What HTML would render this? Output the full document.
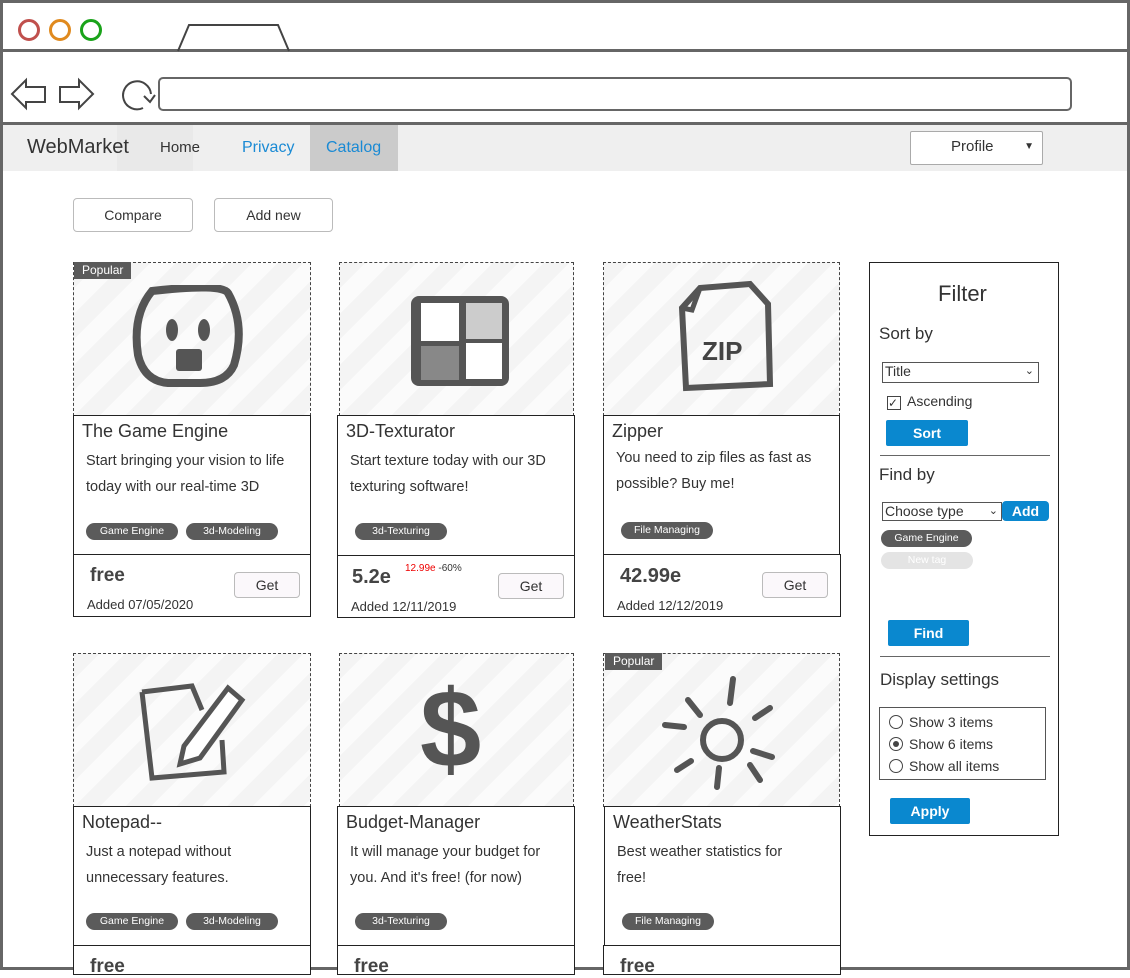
<!DOCTYPE html>
<html><head><meta charset="utf-8"><style>
*{box-sizing:border-box;margin:0;padding:0}
body{width:1130px;height:970px;position:relative;overflow:hidden;background:#fff;font-family:"Liberation Sans",sans-serif;color:#333}
.a{position:absolute}
.img{position:absolute;border:1.5px dashed #444;background:repeating-linear-gradient(135deg,#f4f4f4 0 18px,#fbfbfb 18px 36px)}
.body{position:absolute;border:1.5px solid #222;background:#fff}
.foot{position:absolute;border:1.5px solid #222;background:#fff}
.title{position:absolute;left:8px;top:5px;font-size:18px;color:#333}
.desc{position:absolute;left:12px;top:32px;font-size:14.5px;line-height:26px;color:#333;width:205px;height:52px;overflow:hidden}
.tag{position:absolute;height:17px;border-radius:9px;background:#5b5b5b;color:#fff;font-size:10.5px;line-height:17px;text-align:center}
.pop{position:absolute;background:#5b5b5b;color:#fff;font-size:12px;padding:0 8px;height:17px;line-height:17px}
.btn{position:absolute;border:1px solid #bbb;border-radius:4px;background:#fff;font-size:14px;text-align:center;color:#333}
.get{position:absolute;width:66px;height:26px;border:1px solid #bbb;border-radius:4px;background:#fbf8fb;font-size:14px;line-height:24px;text-align:center}
.blue{position:absolute;background:#0a88cf;color:#fff;font-weight:bold;font-size:14px;text-align:center;border-radius:2px}
.rad{display:inline-block;width:14px;height:14px;border:1px solid #444;border-radius:50%;vertical-align:-2px;margin-right:6px;position:relative}
</style></head><body>
<div class="a" style="left:0;top:0;width:1130px;height:970px;border:3px solid #666"></div>
<div class="a" style="left:0;top:49px;width:1130px;height:3px;background:#666"></div>
<div class="a" style="left:0;top:122px;width:1130px;height:3px;background:#666"></div>
<div class="a" style="left:18px;top:19px;width:22px;height:22px;border:3px solid #c0504d;border-radius:50%"></div>
<div class="a" style="left:49px;top:19px;width:22px;height:22px;border:3px solid #e08a1e;border-radius:50%"></div>
<div class="a" style="left:80px;top:19px;width:22px;height:22px;border:3px solid #1aa31a;border-radius:50%"></div>
<svg class="a" style="left:0;top:0" width="400" height="125">
<path d="M178 51 L189 25 L278 25 L289 51" fill="none" stroke="#444" stroke-width="2"/>
<path d="M12 94 L26 80 L26 87 L45 87 L45 102 L26 102 L26 108 Z" fill="none" stroke="#444" stroke-width="2"/>
<path d="M93 94 L79 80 L79 87 L60 87 L60 102 L79 102 L79 108 Z" fill="none" stroke="#444" stroke-width="2"/>
<path d="M143 108 A14 14 0 1 1 151 94 M144 96 L150 102 L155 95" fill="none" stroke="#444" stroke-width="2"/>
</svg>
<div class="a" style="left:158px;top:77px;width:914px;height:34px;border:2px solid #666;border-radius:5px"></div>
<div class="a" style="left:3px;top:125px;width:1124px;height:46px;background:#efefef"></div>
<div class="a" style="left:117px;top:125px;width:76px;height:46px;background:#e9e9e9"></div>
<div class="a" style="left:310px;top:125px;width:88px;height:46px;background:#cbcbcb"></div>
<div class="a" style="left:27px;top:136px;font-size:20px;color:#333">WebMarket</div>
<div class="a" style="left:160px;top:139px;font-size:15px;color:#333">Home</div>
<div class="a" style="left:242px;top:139px;font-size:16px;color:#1a8ad4">Privacy</div>
<div class="a" style="left:326px;top:139px;font-size:16px;color:#1a8ad4">Catalog</div>
<div class="a" style="left:910px;top:131px;width:133px;height:34px;background:#fff;border:1px solid #aaa;border-radius:2px;font-size:15px;padding:6px 0 0 40px">Profile<span style="position:absolute;right:8px;top:9px;font-size:10px">▼</span></div>
<div class="btn" style="left:73px;top:198px;width:120px;height:34px;line-height:32px">Compare</div>
<div class="btn" style="left:214px;top:198px;width:119px;height:34px;line-height:32px">Add new</div>

<div class="img" style="left:73px;top:262px;width:238px;height:154px"></div>
<div class="pop" style="left:74px;top:262px">Popular</div>
<svg class="a" style="left:130px;top:285px" width="120" height="110"><path d="M22 6 Q92 -2 98 8 Q116 40 104 80 Q96 98 70 98 L38 98 Q14 96 8 70 Q2 30 22 6 Z" fill="none" stroke="#555" stroke-width="8"/><ellipse cx="42" cy="45" rx="6" ry="11" fill="#555"/><ellipse cx="74" cy="45" rx="6" ry="11" fill="#555"/><rect x="46" y="64" width="26" height="22" rx="3" fill="#555"/></svg>
<div class="body" style="left:73px;top:415px;width:238px;height:140px"><div class="title">The Game Engine</div><div class="desc">Start bringing your vision to life today with our real-time 3D development platform</div><div class="tag" style="left:12px;top:107px;width:92px">Game Engine</div><div class="tag" style="left:112px;top:107px;width:92px">3d-Modeling</div></div>
<div class="foot" style="left:73px;top:554px;width:238px;height:63px"><div class="a" style="left:16px;top:10px;font-size:19px;font-weight:bold;color:#444">free</div><div class="a" style="left:13px;top:42px;font-size:13px">Added 07/05/2020</div><div class="get" style="left:160px;top:17px">Get</div></div>

<div class="img" style="left:339px;top:262px;width:235px;height:154px"></div>
<svg class="a" style="left:405px;top:290px" width="110" height="100"><rect x="6" y="6" width="98" height="90" rx="8" fill="#555"/><rect x="16" y="13" width="38" height="38" fill="#fff"/><rect x="61" y="53" width="36" height="36" fill="#fff"/><rect x="61" y="13" width="36" height="36" fill="#ccc"/><rect x="16" y="56" width="38" height="34" fill="#888"/></svg>
<div class="body" style="left:337px;top:415px;width:238px;height:141px"><div class="title">3D-Texturator</div><div class="desc">Start texture today with our 3D texturing software!</div><div class="tag" style="left:17px;top:107px;width:92px">3d-Texturing</div></div>
<div class="foot" style="left:337px;top:555px;width:238px;height:63px"><div class="a" style="left:14px;top:10px;font-size:20px;font-weight:bold;color:#444">5.2e</div><div class="a" style="left:67px;top:7px;font-size:10px;color:#e00">12.99e <span style="color:#333">-60%</span></div><div class="a" style="left:13px;top:43px;font-size:13px">Added 12/11/2019</div><div class="get" style="left:160px;top:17px">Get</div></div>

<div class="img" style="left:603px;top:262px;width:237px;height:154px"></div>
<svg class="a" style="left:670px;top:280px" width="110" height="120"><path d="M30 8 L80 4 L98 24 L100 104 L16 108 L12 28 Z" fill="none" stroke="#555" stroke-width="6"/><path d="M30 8 L22 30 L12 28" fill="none" stroke="#555" stroke-width="5"/><text x="32" y="80" font-size="26" font-family="Liberation Sans" font-weight="bold" fill="#444">ZIP</text></svg>
<div class="body" style="left:603px;top:415px;width:237px;height:140px"><div class="title">Zipper</div><div class="desc" style="top:29px">You need to zip files as fast as possible? Buy me!</div><div class="tag" style="left:17px;top:106px;width:92px">File Managing</div></div>
<div class="foot" style="left:603px;top:554px;width:238px;height:63px"><div class="a" style="left:16px;top:10px;font-size:20px;font-weight:bold;color:#444">42.99e</div><div class="a" style="left:13px;top:43px;font-size:13px">Added 12/12/2019</div><div class="get" style="left:158px;top:17px">Get</div></div>

<div class="img" style="left:73px;top:653px;width:238px;height:154px"></div>
<svg class="a" style="left:130px;top:670px" width="120" height="120"><path d="M12 22 L62 16 L72 40 M12 22 L22 108 L94 102 L92 70" fill="none" stroke="#555" stroke-width="5"/><path d="M54 76 L98 18 L112 30 L70 88 L50 94 Z" fill="#fff" stroke="#555" stroke-width="5"/></svg>
<div class="body" style="left:73px;top:806px;width:238px;height:140px"><div class="title">Notepad--</div><div class="desc">Just a notepad without unnecessary features.</div><div class="tag" style="left:12px;top:106px;width:92px">Game Engine</div><div class="tag" style="left:112px;top:106px;width:92px">3d-Modeling</div></div>
<div class="foot" style="left:73px;top:945px;width:238px;height:30px"><div class="a" style="left:16px;top:10px;font-size:19px;font-weight:bold;color:#444">free</div></div>

<div class="img" style="left:339px;top:653px;width:235px;height:154px"></div>
<div class="a" style="left:420px;top:660px;font-size:110px;font-weight:bold;color:#555;line-height:140px">$</div>
<div class="body" style="left:337px;top:806px;width:238px;height:140px"><div class="title">Budget-Manager</div><div class="desc">It will manage your budget for you. And it's free! (for now)</div><div class="tag" style="left:17px;top:106px;width:92px">3d-Texturing</div></div>
<div class="foot" style="left:337px;top:945px;width:238px;height:30px"><div class="a" style="left:16px;top:10px;font-size:19px;font-weight:bold;color:#444">free</div></div>

<div class="img" style="left:603px;top:653px;width:237px;height:154px"></div>
<div class="pop" style="left:605px;top:653px">Popular</div>
<svg class="a" style="left:655px;top:665px" width="140" height="130"><g stroke="#555" stroke-width="6" stroke-linecap="round" fill="none"><circle cx="67" cy="75" r="19"/><path d="M78 14 L75 38 M33 35 L45 50 M10 60 L29 62 M22 105 L36 96 M62 122 L64 103 M105 115 L95 100 M117 92 L98 86 M115 43 L100 53"/></g></svg>
<div class="body" style="left:604px;top:806px;width:237px;height:140px"><div class="title">WeatherStats</div><div class="desc" style="width:195px">Best weather statistics for free!</div><div class="tag" style="left:17px;top:106px;width:92px">File Managing</div></div>
<div class="foot" style="left:603px;top:945px;width:238px;height:30px"><div class="a" style="left:16px;top:10px;font-size:19px;font-weight:bold;color:#444">free</div></div>

<div class="a" style="left:869px;top:262px;width:190px;height:574px;border:1.5px solid #222"></div>
<div class="a" style="left:938px;top:281px;font-size:22px">Filter</div>
<div class="a" style="left:879px;top:324px;font-size:17px">Sort by</div>
<div class="a" style="left:882px;top:362px;width:157px;height:21px;border:1px solid #555;font-size:14px;padding-left:2px">Title<span style="position:absolute;right:4px;top:1px;font-size:11px">⌄</span></div>
<div class="a" style="left:887px;top:393px;font-size:14px"><span style="display:inline-block;width:14px;height:14px;border:1px solid #444;font-size:12px;line-height:12px;vertical-align:-1px;margin-right:6px">✓</span>Ascending</div>
<div class="blue" style="left:886px;top:420px;width:82px;height:26px;line-height:26px">Sort</div>
<div class="a" style="left:880px;top:455px;width:170px;height:1px;background:#666"></div>
<div class="a" style="left:879px;top:465px;font-size:17px">Find by</div>
<div class="a" style="left:882px;top:502px;width:120px;height:19px;border:1px solid #555;font-size:14px;line-height:17px;padding-left:2px">Choose type<span style="position:absolute;right:3px;top:0;font-size:11px">⌄</span></div>
<div class="blue" style="left:1002px;top:501px;width:47px;height:20px;line-height:20px;border-radius:4px">Add</div>
<div class="tag" style="left:881px;top:530px;width:91px">Game Engine</div>
<div class="tag" style="left:881px;top:552px;width:92px;background:#e4e4e4">New tag</div>
<div class="blue" style="left:888px;top:620px;width:81px;height:26px;line-height:26px">Find</div>
<div class="a" style="left:880px;top:656px;width:170px;height:1px;background:#666"></div>
<div class="a" style="left:880px;top:670px;font-size:17px">Display settings</div>
<div class="a" style="left:879px;top:707px;width:167px;height:73px;border:1px solid #555;font-size:14px;line-height:22px;padding:3px 0 0 9px">
<div><span class="rad"></span>Show 3 items</div>
<div><span class="rad"><span style="position:absolute;left:3px;top:3px;width:6px;height:6px;border-radius:50%;background:#444"></span></span>Show 6 items</div>
<div><span class="rad"></span>Show all items</div></div>
<div class="blue" style="left:890px;top:798px;width:80px;height:26px;line-height:26px">Apply</div>
</body></html>
